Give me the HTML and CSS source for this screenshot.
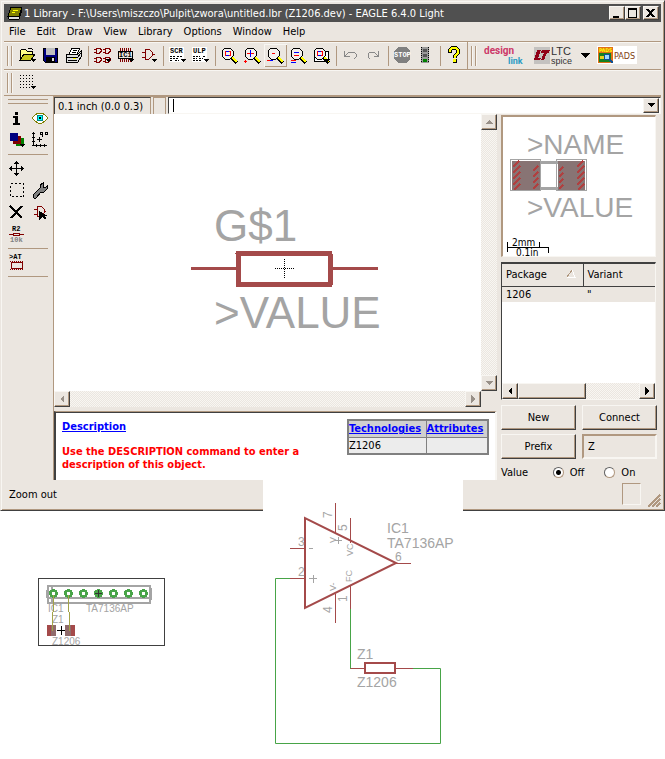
FILE: index.html
```html
<!DOCTYPE html>
<html lang="en">
<head>
<meta charset="utf-8">
<title>Library - EAGLE 6.4.0 Light</title>
<link rel="stylesheet" href="styles.css">
</head>
<body>
<svg class="defs" aria-hidden="true">
  <symbol id="lens" viewBox="0 0 23 23">
    <path d="M13 13l6 6" stroke="#000" stroke-width="4"/>
    <path d="M13 12l6 6" stroke="#ff0" stroke-width="2"/>
    <path d="M7 4h5l3 3v5l-3 3H7l-3-3V7z" fill="#f4f1ed" stroke="#000"/>
  </symbol>
  <symbol id="more" viewBox="0 0 23 23"><path d="M15 15h5v1h-1v1h-1v1h-1v-1h-1v-1h-1z" fill="#000"/></symbol>
</svg>

<main class="window">
  <header class="titlebar">
    <svg class="app-icon" width="16" height="14" viewBox="0 0 16 14"><path d="M4 1h11l-3 9H1z" fill="#808000" stroke="#000"/><path d="M1 10l1 3h10l3-9" fill="#ddd" stroke="#000"/><path d="M4 1h11l-3 9H1z" fill="#808000" stroke="#000"/><path d="M6 4h5M5 6h3" stroke="#ff0"/></svg>
    <h1>1 Library - F:\Users\miszczo\Pulpit\zwora\untitled.lbr (Z1206.dev) - EAGLE 6.4.0 Light</h1>
    <div class="caption-buttons">
      <button aria-label="Minimize"><svg width="12" height="11"><path d="M2 8h6v2H2z"/></svg></button>
      <button aria-label="Maximize"><svg width="12" height="11"><path d="M1 0h9v10H1zM2 2v7h7V2z" fill-rule="evenodd"/></svg></button>
      <button class="close" aria-label="Close"><svg width="12" height="11"><path d="M2 1l7 8M9 1L2 9" stroke="#000" stroke-width="2"/></svg></button>
    </div>
  </header>

  <nav class="menu">
    <button>File</button><button>Edit</button><button>Draw</button><button>View</button><button>Library</button><button>Options</button><button>Window</button><button>Help</button>
  </nav>

  <div class="toolbar">
    <span class="grip"></span>
    <button class="tool" aria-label="Open"><svg viewBox="0 0 23 23"><path d="M4 16V7l2-2h3l2 2h5v3" fill="#ff8" stroke="#000"/><path d="M4 16l4-6h11l-4 6z" fill="#c8c81e" stroke="#000"/><path d="M12 4h3l2 2" fill="none" stroke="#000"/><use href="#more"/></svg></button>
    <button class="tool" aria-label="Save"><svg viewBox="0 0 23 23"><path d="M4 4h14v14H6l-2-2z" fill="#000080" stroke="#000"/><path d="M7 4h9v7H7z" fill="#c0c0c0"/><path d="M7 13h9v5H7z" fill="#000"/><path d="M13 14h2v3h-2z" fill="#ddd"/></svg></button>
    <button class="tool" aria-label="Print"><svg viewBox="0 0 23 23"><path d="M4 10h12l3-3v6l-3 5H4z" fill="#ddd" stroke="#000"/><path d="M7 10l3-6h8l-3 6z" fill="#fff" stroke="#000"/><path d="M4 13h12l3-4M11 6h4M10 8h4M6 16h9" fill="none" stroke="#000"/><path d="M11 14h3v1h-3z" fill="#ff0"/></svg></button>
    <span class="sep"></span>
    <button class="tool" aria-label="Device"><svg viewBox="0 0 23 23"><path d="M5.500 4h3l2 2v1l-2 2h-3zM3 5.500h2M3 8.500h2M14.500 4h3l2 2v1l-2 2h-3zM12 5.500h2M12 8.500h2M5.500 13h3l2 2v1l-2 2h-3zM3 14.500h2M3 17.500h2M14.500 13h3l2 2v1l-2 2h-3zM12 14.500h2M12 17.500h2" fill="none" stroke="#800000"/><use href="#more"/></svg></button>
    <button class="tool" aria-label="Package"><svg viewBox="0 0 23 23"><path d="M6.500 4v14M8.500 4v14M10.500 4v14M12.500 4v14M14.500 4v14M16.500 4v14" stroke="#800000"/><path d="M4.500 7.500h14v7h-14z" fill="#ebe6e0" stroke="#000"/><text x="5" y="13" class="micro">IC1</text><use href="#more"/></svg></button>
    <button class="tool" aria-label="Symbol"><svg viewBox="0 0 23 23"><path d="M8 5h4l3 3v4l-3 3H8zM5 8h3M5 13h3M15 10.500h3" fill="none" stroke="#800000"/><use href="#more"/></svg></button>
    <span class="sep"></span>
    <button class="tool" aria-label="Script"><svg viewBox="0 0 23 23"><path d="M3 3h15v15H3z" fill="#fff"/><text x="4" y="9" class="micro">SCR</text><path d="M4 12.500h5M11 12.500h6M4 14.500h9M4 16.500h3M9 16.500h4" stroke="#000" stroke-dasharray="2 1"/><use href="#more"/></svg></button>
    <button class="tool" aria-label="User language program"><svg viewBox="0 0 23 23"><path d="M3 3h15v15H3z" fill="#fff"/><text x="4" y="9" class="micro">ULP</text><path d="M4 12.500h7M14 12.500h3M4 14.500h4M10 14.500h4M4 16.500h9" stroke="#000" stroke-dasharray="2 1"/><use href="#more"/></svg></button>
    <span class="sep"></span>
    <button class="tool" aria-label="Zoom to fit"><svg viewBox="0 0 23 23"><use href="#lens"/><path d="M7 7h5v4H7z" fill="none" stroke="#f00"/><path d="M8 7h3M8 11h3" stroke="#00f"/></svg></button>
    <button class="tool" aria-label="Zoom in"><svg viewBox="0 0 23 23"><use href="#lens"/><path d="M6 9.500h7" stroke="#f00"/><path d="M9.500 6v7" stroke="#00f"/><path d="M3 17.500h3M4.500 16v3" stroke="#f00"/></svg></button>
    <button class="tool active" aria-label="Zoom out"><svg viewBox="0 0 23 23"><use href="#lens"/><path d="M8 9.500h3" stroke="#f00"/><path d="M3 16.500h3" stroke="#f00"/><path d="M6 16.500h3" stroke="#00f"/></svg></button>
    <button class="tool" aria-label="Redraw"><svg viewBox="0 0 23 23"><use href="#lens"/><path d="M7 8.500h5M4 18.500h5" stroke="#00f"/><path d="M7 11.500h5M4 16.500h5" stroke="#f00"/></svg></button>
    <button class="tool" aria-label="Zoom select"><svg viewBox="0 0 23 23"><path d="M8 7h10v10H4v-4" fill="#fff" stroke="#000"/><use href="#lens"/><path d="M7 7h5v4H7z" fill="none" stroke="#f00"/><path d="M8 7h3M8 11h3" stroke="#00f"/><use href="#more"/></svg></button>
    <span class="sep"></span>
    <button class="tool" aria-label="Undo"><svg viewBox="0 0 23 23"><path d="M5.500 7v5h5M6 12l4-4h5l2 2v3l-2 2" fill="none" stroke="#888"/></svg></button>
    <button class="tool" aria-label="Redo"><svg viewBox="0 0 23 23"><path d="M16.500 7v5h-5M16 12l-4-4H8l-2 2v3l2 2" fill="none" stroke="#888"/></svg></button>
    <span class="sep"></span>
    <button class="tool" aria-label="Stop"><svg viewBox="0 0 23 23"><path d="M7 3h8l4 4v8l-4 4H7l-4-4V7z" fill="#808080"/><text x="3" y="13" class="micro stop">STOP</text></svg></button>
    <button class="tool" aria-label="Go"><svg viewBox="0 0 23 23"><path d="M7 3h8v16H7z" fill="#999"/><path d="M7.500 3v16M14.500 3v16" stroke="#000" stroke-dasharray="1 1"/><path d="M9 5h4v3H9zM9 10h4v3H9z" fill="#555"/><path d="M9 15h4v3H9z" fill="#008000"/></svg></button>
    <span class="sep"></span>
    <button class="tool" aria-label="Help"><svg viewBox="0 0 23 23"><path d="M7 9V6l2-2h4l2 2v3l-3 3v2" fill="none" stroke="#000" stroke-width="4"/><path d="M7 8V6l2-2h4l2 2v3l-3 3v2" fill="none" stroke="#ff0" stroke-width="2"/><path d="M10 15h4v4h-4z"/><path d="M10 15h3v3h-3z" fill="#ff0"/></svg></button>
    <span class="sep tall"></span>
    <span class="grip"></span>
    <button class="brand" aria-label="DesignLink"><svg width="42" height="23"><text x="0" y="10" class="design">design</text><text x="24" y="20" class="link">link</text></svg></button>
    <button class="brand" aria-label="LTC spice"><svg width="42" height="23"><path d="M0 3h16v17H0z" fill="#c4c2c0"/><path d="M3 6h4L4 14h3l-1 2H0zM8 6h8l-1 3h-2l-3 7H7l3-7H7z" fill="#900018"/><text x="17" y="11" class="ltc">LTC</text><text x="17" y="20" class="spice">spice</text></svg></button>
    <button class="brand drop" aria-label="LTC spice menu"><svg width="10" height="23"><path d="M0 9h9l-4.500 5z"/></svg></button>
    <button class="brand" aria-label="PADS"><svg width="40" height="23"><path d="M0 2h40v18H0z" fill="#fff"/><path d="M1 3h15v16H1z" fill="#e07018"/><path d="M2 9h12v9H2z" fill="#158020"/><path d="M3 12h4v3H3z" fill="#e8d020"/><circle cx="10" cy="13" r="3" fill="#9ed8ff" stroke="#105090"/><path d="M12 15l4 4" stroke="#105090" stroke-width="2"/><text x="2" y="8" class="pads-mini">PADS</text><text x="17" y="15" class="pads">PADS</text></svg></button>
  </div>

  <div class="toolbar second">
    <span class="grip"></span>
    <button class="tool" aria-label="Grid"><svg viewBox="0 0 23 23"><path d="M4 4.500h14M4 7.500h14M4 10.500h14M4 13.500h14M4 16.500h10" stroke="#000" stroke-dasharray="1 2"/><use href="#more"/></svg></button>
  </div>

  <div class="workspace">
    <aside class="palette">
      <span class="hgrip"></span>
      <button class="tool" aria-label="Info"><svg viewBox="0 0 23 23"><path d="M10 5h3v3h-3zM8 9h5v7h2v2H8v-2h2v-5H8z"/></svg></button>
      <button class="tool" aria-label="Show"><svg viewBox="0 0 23 23"><path d="M4 11l3-3 3-2h4l3 2 3 3-3 3-3 2h-4l-3-2z" fill="#fff" stroke="#808000"/><circle cx="12" cy="11" r="3" fill="#0ff" stroke="#088"/><path d="M11 10h2v2h-2z"/></svg></button>
      <button class="tool" aria-label="Display"><svg viewBox="0 0 23 23"><path d="M11 9h8v8h-8z" fill="#008000"/><path d="M8 7h8v8H8z" fill="#800000"/><path d="M5 4h8v8H5z" fill="#000080"/><use href="#more"/></svg></button>
      <button class="tool" aria-label="Mark"><svg viewBox="0 0 23 23"><path d="M5.500 3v14M4 16.500h15M4 4.500h3M4 8.500h3M4 12.500h3M8.500 15v3M12.500 15v3M16.500 15v3M9 10.500h5M11.500 8v5M12.500 3.500h2v2h-2zM14.500 4v4M17.500 3.500h2v2h-2z" fill="none" stroke="#000"/></svg></button>
      <hr>
      <button class="tool wide" aria-label="Move"><svg viewBox="0 0 23 23"><path d="M11.500 4v15M4 11.500h15" stroke="#000"/><path d="M11.500 4l3 3h-6zM11.500 19l3-3h-6zM4 11.500l3-3v6zM19 11.500l-3-3v6z"/></svg></button>
      <button class="tool" aria-label="Group"><svg viewBox="0 0 23 23"><path d="M5.500 4.500h13v13h-13z" fill="none" stroke="#000" stroke-dasharray="2 2"/></svg></button>
      <button class="tool" aria-label="Change"><svg viewBox="0 0 23 23"><path d="M5 16l7-7V6l3-2v4l2 1 2-2v3l-3 3h-3l-5 6H6z" fill="#808080" stroke="#000"/></svg></button>
      <button class="tool" aria-label="Delete"><svg viewBox="0 0 23 23"><path d="M5 5l12 12M17 5L6 17" stroke="#000" stroke-width="2"/></svg></button>
      <button class="tool" aria-label="Add"><svg viewBox="0 0 23 23"><path d="M9 5h4l3 3v4l-3 3H9zM6 8h3M6 13h3M16 10.500h2" fill="none" stroke="#800000"/><path d="M11 10v9l3-3 3 3 1-2-2-2h4z"/></svg></button>
      <button class="tool wide" aria-label="Value"><svg viewBox="0 0 23 23"><text x="7" y="8" class="micro">R2</text><path d="M4 11.500h4M15 11.500h4M8.500 10.500h6v2h-6z" fill="none" stroke="#800000"/><text x="5" y="19" class="micro muted">10k</text></svg></button>
      <hr>
      <button class="tool wide" aria-label="Attribute"><svg viewBox="0 0 23 23"><text x="4" y="8" class="micro">&gt;AT</text><path d="M6.500 11.500h11v6h-11z" fill="none" stroke="#800000"/><path d="M5 10.500h14M5 18.500h14" stroke="#800000" stroke-dasharray="1 1"/></svg></button>
      <hr>
    </aside>

    <section class="editor">
      <div class="command-row">
        <output class="coords">0.1 inch (0.0 0.3)</output>
        <span class="mini-cell"></span>
        <div class="command"><span class="caret"></span><input type="text" aria-label="Command"><button aria-label="Command history"><svg width="9" height="5"><path d="M1 0h7L4.500 4z"/></svg></button></div>
      </div>

      <div class="panes">
        <div class="left-pane">
          <div class="canvas-grid">
            <svg class="canvas" role="img" aria-label="Resistor symbol">
              <text x="160" y="127" class="big">G$1</text>
              <path d="M137 154.500h47M277 154.500h47" stroke="#a44a4a" stroke-width="3"/>
              <path d="M184 139.500h92v31h-92z" fill="none" stroke="#a44a4a" stroke-width="5" stroke-linejoin="round"/>
              <path d="M221 154.500h19M230.500 145v19" stroke="#000" stroke-dasharray="1 1"/>
              <text x="160" y="214" class="big">&gt;VALUE</text>
            </svg>
            <div class="vscroll"><button aria-label="Scroll up"><svg width="8" height="4"><path d="M0 4h8L4 0z"/></svg></button><button aria-label="Scroll down"><svg width="8" height="4"><path d="M0 0h8L4 4z"/></svg></button></div>
            <div class="hscroll"><button aria-label="Scroll left"><svg width="4" height="8"><path d="M4 0v8L0 4z"/></svg></button><button aria-label="Scroll right"><svg width="4" height="8"><path d="M0 0v8l4-4z"/></svg></button></div>
          </div>
          <div class="description">
            <div class="description-text">
              <a href="#description">Description</a>
              <p>Use the DESCRIPTION command to enter a description of this object.</p>
            </div>
            <table class="tech">
              <tr><th><a href="#technologies">Technologies</a></th><th><a href="#attributes">Attributes</a></th></tr>
              <tr><td>Z1206</td><td></td></tr>
            </table>
          </div>
        </div>

        <div class="right-pane">
          <div class="preview">
            <svg role="img" aria-label="Package preview" width="152" height="139">
              <text x="24" y="37" class="mid">&gt;NAME</text>
              <path d="M36 45.500h19M36 71.500h19" stroke="#a4a4a4" stroke-width="3"/>
              <path d="M9 44h28v29H9zM55 44h27v29H55z" fill="#887474"/>
              <path d="M10 50l6-6M10 56l7-7M10 62l7-7M10 68l7-7M11 73l6-6M30 54l5-5M30 60l5-5M30 66l5-5M30 72l5-5M56 54l4-4M56 60l4-4M56 66l4-4M56 72l4-4M74 50l6-6M74 56l7-7M74 62l7-7M74 68l7-7M75 73l6-6" stroke="#b04040" stroke-width="2"/>
              <path d="M7.500 42.500h30v31h-30zM53.500 42.500h30v31h-30z" fill="none" stroke="#a4a4a4"/>
              <text x="24" y="100" class="mid">&gt;VALUE</text>
              <path d="M4.500 125v10M4 130.500h42M36.500 125v5M45.500 130v6" fill="none" stroke="#000"/>
              <text x="9" y="129" class="scale">2mm</text><text x="13" y="139" class="scale">0.1in</text>
            </svg>
          </div>
          <div class="packages">
            <table>
              <thead><tr><th>Package <svg width="10" height="9"><path d="M1 8L6 1" stroke="#b09880"/><path d="M6 1l3 7H1" fill="none" stroke="#fff"/></svg></th><th>Variant</th></tr></thead>
              <tbody><tr><td>1206</td><td>"</td></tr></tbody>
            </table>
            <div class="hscroll dark"><button aria-label="Scroll left"><svg width="4" height="8"><path d="M4 0v8L0 4z"/></svg></button><span class="thumb"></span><button aria-label="Scroll right"><svg width="4" height="8"><path d="M0 0v8l4-4z"/></svg></button></div>
          </div>
          <div class="actions">
            <button>New</button><button>Connect</button>
            <button>Prefix</button><input type="text" value="Z" aria-label="Prefix">
          </div>
          <div class="value-row" role="radiogroup" aria-label="Value">
            <span>Value</span>
            <label><input type="radio" name="value" checked>Off</label>
            <label><input type="radio" name="value">On</label>
          </div>
        </div>
      </div>
    </section>
  </div>

  <footer class="status">
    <span>Zoom out</span>
    <span class="status-cell"></span>
    <svg class="size-grip" width="14" height="14"><path d="M1 13L13 1M5 13l8-8M9 13l4-4" stroke="#b09880" stroke-width="2"/></svg>
  </footer>
</main>

<section class="drawings">
  <svg class="board" width="127" height="68" role="img" aria-label="Board layout">
    <path d="M.5.500h126v67H.500z" fill="#fff" stroke="#404040"/>
    <path d="M10 8h102v17H10zM10 20h102M8.500 12v8M112.500 10v12M14 8v17" fill="none" stroke="#a4a4a4" stroke-width="2"/>
    <g fill="#fff" stroke="#48a448" stroke-width="3"><circle cx="15.500" cy="15.500" r="3"/><circle cx="30.500" cy="15.500" r="3"/><circle cx="45.500" cy="15.500" r="3"/><circle cx="60.500" cy="15.500" r="3" fill="#48a448"/><circle cx="75.500" cy="15.500" r="3"/><circle cx="90.500" cy="15.500" r="3"/><circle cx="105.500" cy="15.500" r="3"/></g>
    <path d="M57 15.500h7M60.500 12v7" stroke="#333"/>
    <text x="10" y="34" class="tiny">IC1</text><text x="48" y="34" class="tiny">TA7136AP</text><text x="14" y="45" class="tiny">Z1</text>
    <path d="M9 47h28v11H9z" fill="#a44a4a"/><path d="M13 47h5v11h-5zM27 47h6v11h-6z" fill="#906c6c"/><path d="M18 47h9v11h-9z" fill="#fff"/>
    <path d="M19 52.500h8M23.500 48v9" stroke="#000"/>
    <path d="M15.500 17v17M14.500 34v19M30.500 17v17M31.500 34v19" stroke="#a4a448"/>
    <text x="14" y="67" class="tiny">Z1206</text>
  </svg>
  <svg class="schematic" width="200" height="280" role="img" aria-label="Schematic of IC1 with jumper Z1">
    <path d="M27 69.500h15M27 99.500h15M72.500 24v30M87.500 39v25M72.500 115v29M87.500 107v23M148 84.500h-15M87 189.500h15M132 189.500h18" stroke="#a44a4a"/>
    <path d="M42 39v90l91-45z" fill="none" stroke="#a44a4a" stroke-width="2"/>
    <path d="M27 99.500H12.500v165h165v-75H150M87.500 130v59.500" fill="none" stroke="#48a448"/>
    <path d="M102 184h30v10h-30z" fill="#fff" stroke="#a44a4a" stroke-width="2"/>
    <g class="label">
      <text x="124" y="54">IC1</text><text x="124" y="69">TA7136AP</text><text x="94" y="180">Z1</text><text x="94" y="208">Z1206</text>
      <g class="pin"><text x="35" y="67">3</text><text x="35" y="97">2</text><text x="132" y="82">6</text><text transform="translate(69 39) rotate(-90)">7</text><text transform="translate(84 52) rotate(-90)">5</text><text transform="translate(69 134) rotate(-90)">4</text><text transform="translate(84 123) rotate(-90)">1</text></g>
      <g class="pin-name"><text transform="translate(73 64) rotate(-90)">V</text><text transform="translate(90 77) rotate(-90)">VC</text><text transform="translate(89 103) rotate(-90)">FC</text><text transform="translate(73 112) rotate(-90)">V-</text></g>
    </g>
    <path d="M46 69.500h4M46 99.500h8M50.500 96v8M72 61.500h7M75.500 58v7" stroke="#a4a4a4"/>
  </svg>
</section>
</body>
</html>
```
FILE: styles.css
```css
:root {
  --face: #ebe6e0;
  --light: #f8f6f2;
  --brown: #b09880;
  --dark: #404040;
  --sketch: #a4a4a4;
}

* { box-sizing: border-box; }

body {
  margin: 0;
  background: #fff;
  color: #000;
  font: 11px/13px "DejaVu Sans Condensed", "DejaVu Sans", sans-serif;
}

button, input { font: inherit; color: inherit; margin: 0; padding: 0; border: 0; background: none; border-radius: 0; }
svg { display: block; flex: none; shape-rendering: crispEdges; }
.defs { position: absolute; width: 0; height: 0; }

.window {
  display: flex;
  flex-direction: column;
  background: var(--face);
  border: 1px solid var(--face);
  border-right-color: var(--dark);
  border-bottom-color: var(--dark);
  box-shadow: inset 1px 1px var(--light), inset -1px -1px var(--brown);
  padding: 3px 3px 2px;
}

.titlebar { display: flex; align-items: center; height: 18px; background: #505050; color: #fff; padding: 0 2px 0 3px; }
.titlebar h1 { flex: 1; margin: 0 0 0 1px; font-size: 11px; font-weight: normal; white-space: nowrap; }
.caption-buttons { display: flex; }
.caption-buttons button { width: 16px; height: 14px; display: grid; place-items: center; }
.caption-buttons .close { margin-left: 2px; }
.caption-buttons button, .vscroll button, .hscroll button, .thumb, .command button, .actions button {
  background: var(--face);
  border: 1px solid;
  border-color: var(--light) var(--dark) var(--dark) var(--light);
  box-shadow: inset -1px -1px var(--brown);
}

.menu { display: flex; gap: 11px; height: 19px; padding: 0 5px; align-items: center; }

.toolbar { display: flex; align-items: center; height: 28px; border-top: 1px solid var(--brown); box-shadow: inset 0 1px var(--light); padding-left: 3px; }
.toolbar.second { height: 26px; }
.grip { width: 5px; height: 20px; margin-right: 4px; border: solid var(--brown); border-width: 0 1px; box-shadow: inset 1px 0 var(--light), 1px 0 var(--light); }
.tool { width: 23px; height: 23px; flex: none; }
.tool svg { width: 23px; height: 23px; }
.tool.active { box-shadow: inset 1px 1px var(--light), inset -1px -1px var(--brown); }
.sep { width: 1px; height: 20px; margin: 0 2px 0 3px; background: var(--brown); }
.sep.tall { height: 27px; margin: 0 3px 0 1px; }
.brand { margin: 0 4px; }
.brand.drop { margin: 0 2px 0 1px; }

.micro { font: bold 7px "Liberation Mono", monospace; }
.micro.stop { fill: #fff; }
.micro.muted { fill: #808080; }
.design { font: bold 10px Roboto, sans-serif; fill: #cc3868; }
.link { font: bold 9px Roboto, sans-serif; fill: #2c9cc4; }
.ltc { font: 11px "Liberation Sans", sans-serif; fill: #333; }
.spice { font: 9px "Liberation Sans", sans-serif; fill: #333; }
.pads { font: 9px "DejaVu Sans Condensed", sans-serif; fill: #804010; }
.pads-mini { font: bold 5px "DejaVu Sans Condensed", sans-serif; fill: #ff0; }

.workspace { display: flex; border-top: 1px solid var(--brown); }
.palette {
  width: 50px;
  flex: none;
  display: flex;
  flex-wrap: wrap;
  align-content: flex-start;
  padding: 3px 2px 0 1px;
  border-right: 1px solid var(--brown);
}
.palette .tool { height: 22px; }
.palette .wide { margin-right: 23px; }
.palette hr { width: 42px; height: 1px; margin: 3px 3px 2px; border: 0; background: var(--brown); }
.hgrip { width: 42px; height: 5px; margin: 0 3px 3px; border: solid var(--brown); border-width: 1px 0; }

.editor { flex: 1; min-width: 0; }
.command-row { display: flex; height: 18px; gap: 2px; border-top: 1px solid var(--brown); }
.coords { width: 97px; padding: 2px 3px; border-left: 1px solid var(--dark); border-top: 1px solid var(--dark); border-right: 1px solid var(--brown); white-space: nowrap; }
.mini-cell { width: 13px; border: 1px solid var(--brown); border-bottom: 0; }
.command { flex: 1; display: flex; align-items: center; background: #fff; border: 1px solid var(--dark); border-right-color: var(--light); border-bottom-color: var(--light); }
.caret { width: 1px; height: 13px; margin-left: 4px; background: #000; }
.command input { flex: 1; min-width: 0; height: 15px; outline: 0; }
.command button { width: 16px; height: 15px; margin-right: 1px; display: grid; place-items: center; }

.panes { display: flex; }
.left-pane { flex: 1; min-width: 0; }
.canvas-grid { display: grid; grid-template-columns: minmax(0, 1fr) 16px; grid-template-rows: 277px 16px; }
.canvas { width: 100%; height: 277px; background: #fff; }
.vscroll, .hscroll {
  display: flex;
  justify-content: space-between;
  background: repeating-conic-gradient(var(--light) 0 25%, var(--face) 0 50%) 0 0 / 2px 2px;
}
.vscroll { flex-direction: column; }
.vscroll button, .hscroll button { width: 16px; height: 16px; display: grid; place-items: center; }
.vscroll svg, .hscroll svg { fill: #989088; }
.hscroll.dark svg { fill: #000; }
.thumb { width: 68px; margin-right: auto; }

.big { font: 44px "Liberation Sans", sans-serif; fill: var(--sketch); }
.mid { font: 28px "Liberation Sans", sans-serif; fill: var(--sketch); }
.scale { font: 10px "DejaVu Sans Condensed", sans-serif; }

.description {
  display: flex;
  justify-content: space-between;
  margin-top: 4px;
  height: 69px;
  background: #fff;
  border: 2px solid var(--dark);
  border-top: 1px solid var(--brown);
  border-right-color: var(--light);
  border-bottom: 0;
  box-shadow: inset 0 1px var(--dark);
  padding: 7px 6px 0;
}
.description a { color: #00f; font-weight: bold; }
.description-text { width: 250px; padding-top: 1px; }
.description p { margin: 12px 0 0; color: #f00; font-weight: bold; }
.tech { width: 142px; height: 36px; border: 2px solid #808080; border-collapse: collapse; }
.tech th, .tech td { padding: 0; height: 17px; border: 1px solid #808080; text-align: left; background: #ececec; }
.tech th { background: #d0d0d0; }
.tech th:first-child { width: 78px; }

.right-pane { width: 164px; flex: none; padding: 1px 5px 0 4px; }
.preview { height: 142px; background: #fff; border: 2px solid var(--brown); border-right: 1px solid var(--light); border-bottom: 1px solid var(--light); width: 155px; }
.preview svg { overflow: visible; }
.packages { margin-top: 5px; width: 155px; height: 138px; display: flex; flex-direction: column; justify-content: space-between; background: #fff; border: 1px solid var(--dark); border-top: 2px solid var(--dark); border-right-color: var(--light); border-bottom-color: var(--light); }
.packages table { width: 100%; border-collapse: collapse; }
.packages th, .packages td { height: 16px; padding: 0 4px; text-align: left; font-weight: normal; background: var(--face); }
.packages th { height: 22px; border-bottom: 1px solid var(--dark); }
.packages th:first-child { width: 81px; border-right: 1px solid var(--dark); }
.packages th svg { display: inline-block; margin-left: 16px; }

.actions { display: grid; grid-template-columns: 75px 75px; gap: 4px 6px; margin-top: 5px; }
.actions button, .actions input { height: 25px; }
.actions input { width: 75px; padding-left: 4px; background: var(--face); border: 2px solid var(--brown); border-right-color: var(--light); border-bottom-color: var(--light); }

.value-row { display: flex; align-items: center; margin-top: 7px; height: 13px; }
.value-row span { width: 54px; }
.value-row label { display: flex; align-items: center; gap: 6px; width: 54px; }
.value-row input { appearance: none; width: 11px; height: 11px; border-radius: 50%; background: #fff; border: 1px solid; border-color: #606060 var(--brown) var(--brown) #606060; }
.value-row input:checked { background: radial-gradient(circle, #000 0 2px, #fff 3px); }

.status { display: flex; align-items: center; height: 28px; padding: 0 0 0 5px; }
.status-cell { width: 19px; height: 22px; margin-left: auto; border: 1px solid var(--brown); border-right-color: var(--light); border-bottom-color: var(--light); }
.size-grip { margin-left: 6px; align-self: flex-end; }

.drawings { display: flex; align-items: flex-start; margin-top: -32px; position: relative; }
.board { margin: 99px 0 0 38px; }
.schematic { margin-left: 98px; background: #fff; shape-rendering: auto; }
.tiny { font: 10px "Liberation Sans", sans-serif; fill: var(--sketch); }
.label { font: 14px "Liberation Sans", sans-serif; fill: var(--sketch); }
.pin { font-size: 12px; }
.pin-name { font-size: 9px; }
```
